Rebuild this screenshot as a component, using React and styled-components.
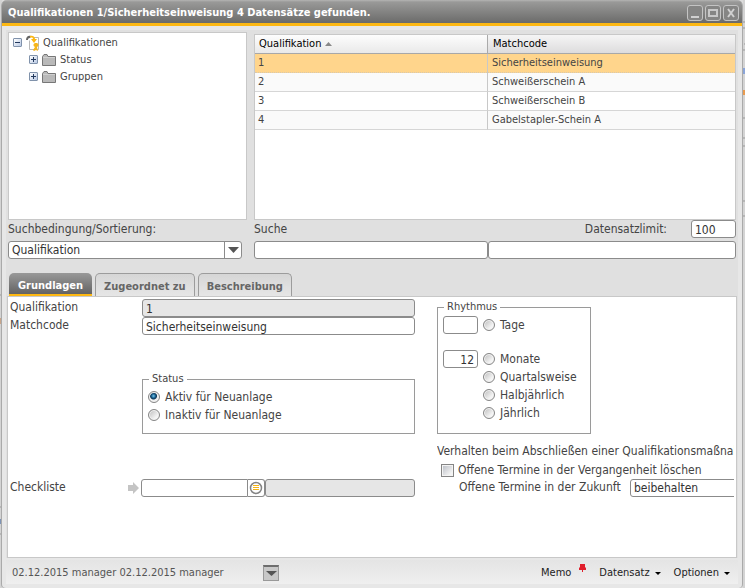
import React, { useState } from "react";
import styled, { createGlobalStyle, css } from "styled-components";

const GlobalStyle = createGlobalStyle`
  *, *::before, *::after { box-sizing: border-box; }
  body {
    margin: 0;
    background: #dcdcdc;
    color: #444;
    font: 12px/18px "DejaVu Sans Condensed", "Noto Sans", sans-serif;
  }
  button, input, select { font: inherit; color: inherit; margin: 0; }
  ul { list-style: none; margin: 0; padding: 0; }
`;

const Desktop = styled.div`
  display: grid;
  grid-template-columns: 2px minmax(0, 1fr) 2px;
  min-height: 100vh;
`;

const EdgeStrip = styled.svg`
  width: 2px;
  height: 100%;
  background: #d4d4d4;
`;

const Window = styled.main`
  display: flex;
  flex-direction: column;
  min-width: 0;
  background: #e7e7e7;
  border-right: 1px solid #aaa;
  border-radius: 6px 6px 4px 4px;
  box-shadow: -1px 0 0 #aaa;
`;

const TitleBar = styled.header`
  display: flex;
  align-items: center;
  justify-content: space-between;
  height: 26px;
  padding: 0 3px 0 6px;
  border-bottom: 3px solid #fdb813;
  border-radius: 5px 5px 0 0;
  background: linear-gradient(#b4b4b3 0, #999998 2px, #6b6b6a 100%);
`;

const Title = styled.h1`
  margin: 0;
  padding-top: 3px;
  font-size: 11px;
  line-height: 20px;
  font-weight: bold;
  color: #fff;
  white-space: nowrap;
`;

const WindowButtons = styled.div`
  display: flex;
  gap: 2px;
  padding-top: 3px;
`;

const WindowButton = styled.button`
  display: grid;
  place-items: center;
  width: 16px;
  height: 16px;
  padding: 0;
  border: 1px solid #c4c4c4;
  border-radius: 3px;
  background: #858584;
`;

const Content = styled.div`
  display: flex;
  flex-direction: column;
  flex: 1;
  margin: 4px 4px 0;
  background: #e0e0e0;
`;

const BrowseGrid = styled.section`
  display: grid;
  grid-template-columns: 239px minmax(0, 1fr);
  column-gap: 7px;
  height: 188px;
  margin: 2px 2px 0;
`;

const Tree = styled.nav`
  padding: 1px 4px;
  background: #fff;
  border: 1px solid #c8c8c8;
  font-size: 11px;
`;

const TreeItem = styled.div`
  display: flex;
  align-items: center;
  gap: 4px;
  height: 17px;
  padding-left: ${(p) => (p.$level ? 16 : 0)}px;
`;

const TreeToggle = styled.button`
  display: grid;
  place-items: center;
  width: 9px;
  height: 9px;
  padding: 0;
  border: 1px solid #8092ab;
  border-radius: 1px;
  background: linear-gradient(135deg, #fff, #b9c9e4);
`;

const RecordList = styled.div`
  margin-top: 2px;
  background: #fff;
  border: 1px solid #c8c8c8;
`;

const Table = styled.table`
  width: 100%;
  table-layout: fixed;
  border-collapse: separate;
  border-spacing: 0;
  font-size: 11px;
  line-height: 18px;
  text-align: left;
`;

const HeaderCell = styled.th`
  width: ${(p) => p.$width};
  height: 18px;
  padding: 0 4px;
  font-weight: normal;
  color: #000;
  border-bottom: 1px solid #a8a8a8;
  background: ${(p) => (p.$sorted ? "linear-gradient(#fdfdfd, #e9e9e9)" : "linear-gradient(#f5f5f5, #dddcdd)")};
  & + & { border-left: 1px solid #aaa; padding-left: 5px; }
`;

const SortButton = styled.button`
  display: flex;
  align-items: center;
  gap: 4px;
  padding: 0;
  border: 0;
  background: none;
`;

const Row = styled.tr`
  background: #fff;
  &:nth-child(even) { background: #fafafa; }
  ${(p) => p.$selected && css`background: #ffd58c;`}
`;

const Cell = styled.td`
  height: 19px;
  padding: 0 3px;
  border-bottom: 1px ${(p) => (p.$selected ? "dotted #d8c8ac" : "solid #d6d6d6")};
  & + & { border-left: 1px ${(p) => (p.$selected ? "dotted #d8bc84" : "solid #c8c8c8")}; padding-left: 4px; }
`;

const SearchGrid = styled.section`
  display: grid;
  grid-template-columns: 234px minmax(0, 1fr);
  column-gap: 12px;
  row-gap: 3px;
  margin: 0 2px;
`;

const Label = styled.label`
  white-space: nowrap;
`;

const FieldLabel = styled(Label)`
  line-height: 16px;
`;

const SearchLabels = styled.div`
  display: flex;
  justify-content: space-between;
  align-items: center;
`;

const Limit = styled.div`
  display: flex;
  align-items: center;
  gap: 24px;
`;

const InputPair = styled.div`
  display: grid;
  grid-template-columns: 234px minmax(0, 1fr);
`;

const Input = styled.input`
  width: ${(p) => p.$width || "100%"};
  min-width: 0;
  height: 18px;
  padding: 1px 3px 0;
  border: 1px solid #8b8b8b;
  border-radius: 3px;
  background: #fff;
  color: #333;
  text-align: ${(p) => p.$align || "left"};
  &:read-only { background: #e6e6e6; }
  &:focus { outline: 1px solid #fdb813; }
`;

const SelectBox = styled.div`
  display: grid;
  grid-template-columns: minmax(0, 1fr) 17px;
  width: ${(p) => p.$width || "100%"};
  height: 18px;
  border: 1px solid #8b8b8b;
  border-radius: 3px;
  background: #fff;
`;

const Select = styled.select`
  grid-area: 1 / 1 / 2 / 3;
  height: 16px;
  padding: 0 20px 0 3px;
  border: 0;
  background: none;
  appearance: none;
  line-height: 16px;
  color: #333;
`;

const SelectArrow = styled.span`
  grid-area: 1 / 2;
  display: grid;
  place-items: center;
  border-left: 1px solid #8b8b8b;
  pointer-events: none;
`;

const Tabs = styled.div`
  display: flex;
  gap: 3px;
  margin: 14px 3px 0;
`;

const Tab = styled.button`
  height: 23px;
  padding: 3px 8px 0;
  border: 1px solid #9c9c9c;
  border-bottom: 0;
  border-radius: 5px 5px 0 0;
  background: linear-gradient(#d6d6d6, #e6e6e6);
  font-size: 11px;
  line-height: 20px;
  font-weight: bold;
  color: #666;
  white-space: nowrap;
  ${(p) => p.$active && css`
    border: 0;
    padding: 3px 9px 0;
    border-bottom: 2px solid #fdb813;
    background: linear-gradient(#999, #636363);
    color: #fff;
  `}
`;

const Panel = styled.section`
  display: grid;
  grid-template-columns: 405px minmax(0, 1fr);
  column-gap: 22px;
  flex: 1;
  margin: 0 1px;
  padding: 2px 2px 0;
  background: #fff;
  border: 1px solid #c8c8c8;
`;

const FormColumn = styled.div`
  display: grid;
  grid-template-columns: 132px minmax(0, 1fr);
  align-content: start;
`;

const Group = styled.fieldset`
  grid-column: ${(p) => p.$column || "auto"};
  width: ${(p) => p.$width || "auto"};
  min-width: 0;
  margin: ${(p) => p.$margin || 0};
  padding: ${(p) => p.$padding};
  border: 1px solid #9a9a9a;
`;

const Legend = styled.legend`
  margin-left: 1px;
  padding: 0 3px;
  font-size: 11px;
  line-height: 16px;
`;

const Option = styled.label`
  grid-column: 2;
  display: flex;
  align-items: center;
  gap: 5px;
  height: 18px;
  white-space: nowrap;
`;

const Radio = styled.input.attrs({ type: "radio" })`
  appearance: none;
  flex: none;
  width: 12px;
  height: 12px;
  border: 1px solid #858585;
  border-radius: 50%;
  box-shadow: inset 0 0 0 1px #f4f4f4;
  background: linear-gradient(135deg, #bbb, #f4f4f4 70%);
  &:checked {
    background: radial-gradient(circle at 45% 40%, #79c8ef 0, #17608e 2px, #0d3556 3px, #eee 4px);
  }
`;

const CheckBox = styled.input.attrs({ type: "checkbox" })`
  appearance: none;
  flex: none;
  width: 13px;
  height: 13px;
  border: 1px solid #858585;
  box-shadow: inset 0 0 0 1px #f4f4f4;
  background: linear-gradient(135deg, #b8bcc4, #f4f4f4 80%);
  &:checked { background: #17608e; }
`;

const ChecklistLabel = styled(FieldLabel)`
  display: flex;
  align-items: flex-start;
  justify-content: space-between;
  padding-right: 2px;
  & svg { margin-top: 3px; }
`;

const ChecklistRow = styled.div`
  grid-column: 1 / 3;
  display: grid;
  grid-template-columns: 131px 107px 17px minmax(0, 1fr);
  margin-top: 45px;
`;

const LookupInput = styled(Input)`
  border-radius: 3px 0 0 3px;
`;

const LookupButton = styled.button`
  display: grid;
  place-items: center;
  padding: 0;
  border: 1px solid #8b8b8b;
  border-left: 0;
  border-radius: 0 3px 3px 0;
  background: #fff;
`;

const RhythmGrid = styled.div`
  display: grid;
  grid-template-columns: 35px auto;
  column-gap: 5px;
`;

const RhythmGap = styled.div`
  grid-column: 1 / 3;
  height: 16px;
`;

const SideColumn = styled.div`
  min-width: 0;
  overflow: hidden;
`;

const Heading = styled.div`
  margin: 8px 0 1px;
  white-space: nowrap;
`;

const CheckLine = styled.label`
  display: flex;
  align-items: center;
  gap: 4px;
  padding-left: 4px;
  white-space: nowrap;
`;

const FutureRow = styled.div`
  display: flex;
  justify-content: space-between;
  width: 323px;
  padding-left: 22px;
`;

const Footer = styled.footer`
  display: grid;
  grid-template-columns: 251px 1fr auto;
  align-items: center;
  height: 24px;
  margin: 2px 4px 4px;
  padding: 2px 8px 0 6px;
  background: linear-gradient(#e4e4e4, #efefef);
  font-size: 11px;
  color: #555;
`;

const CollapseButton = styled.button`
  display: grid;
  place-items: center;
  width: 16px;
  height: 16px;
  padding: 0;
  border: 1px solid #999;
  border-top: 2px solid #6d6d6d;
  background: #c8c8c8;
`;

const FooterMenu = styled.div`
  display: flex;
  gap: 13px;
`;

const MenuButton = styled.button`
  display: flex;
  align-items: center;
  gap: 5px;
  padding: 0;
  border: 0;
  background: none;
  color: #222;
`;

const MemoButton = styled(MenuButton)`
  align-items: flex-start;
  gap: 8px;
`;

const Triangle = ({ w, h, fill, up }) => (
  <svg width={w} height={h} viewBox="0 0 10 5" preserveAspectRatio="none" aria-hidden="true">
    <path d={up ? "M0 5 5 0l5 5z" : "M0 0h10L5 5z"} fill={fill} />
  </svg>
);

const Toggle = ({ open, name }) => (
  <TreeToggle type="button" aria-expanded={Boolean(open)} aria-label={name}>
    <svg width="7" height="7" viewBox="0 0 7 7"><path d={open ? "M1 3h5v1H1z" : "M1 3h2V1h1v2h2v1H4v2H3V4H1z"} fill="#23395d" /></svg>
  </TreeToggle>
);

const FolderIcon = () => (
  <svg width="14" height="12" viewBox="0 0 14 12" aria-hidden="true">
    <path d="M.5 11.5V2.500L2 .5h3l1 2h7.500v9z" fill="#b9b9b9" stroke="#777" />
    <path d="M1 3.500h12" stroke="#d0d0d0" />
  </svg>
);

const DocumentIcon = () => (
  <svg width="13" height="16" viewBox="0 0 13 16" aria-hidden="true">
    <path d="M3.500 5.500V14.500H12.500V2.500H8" fill="#fff" stroke="#b9b9b9" />
    <path d="M0 5C0 1 3 0 5 1l-1 2C2 3 2 4 2 5z" fill="#666" />
    <path d="M4 1c3-1 5 1 5 3h2L8 8 5 4h2C7 3 6 2 4 3z" fill="#fdb813" />
    <path d="M10 8a2 2 0 0 1 1 4l1 4-2-1-2 1-1-1 2-3a2 2 0 0 1 1-4z" fill="#f5b51b" />
  </svg>
);

const records = [
  ["1", "Sicherheitseinweisung"],
  ["2", "Schweißerschein A"],
  ["3", "Schweißerschein B"],
  ["4", "Gabelstapler-Schein A"],
];

const rhythms = ["Quartalsweise", "Halbjährlich", "Jährlich"];
const tabs = ["Grundlagen", "Zugeordnet zu", "Beschreibung"];

export default function App() {
  const [selected, setSelected] = useState("1");
  const [tab, setTab] = useState("Grundlagen");

  return (
    <>
      <GlobalStyle />
      <Desktop>
        <EdgeStrip aria-hidden="true">
          <path d="M0 295h2M0 507h2M0 534h2" stroke="#999" />
          <path d="M0 318h2v6H0z" fill="#c8a58a" />
          <path d="M0 519h2v5H0z" fill="#7d93b5" />
        </EdgeStrip>
        <Window>
          <TitleBar>
            <Title>Qualifikationen 1/Sicherheitseinweisung 4 Datensätze gefunden.</Title>
            <WindowButtons>
              <WindowButton type="button" aria-label="Minimieren">
                <svg width="14" height="14"><path d="M3 10h8v2H3z" fill="#d0d0d0" /></svg>
              </WindowButton>
              <WindowButton type="button" aria-label="Maximieren">
                <svg width="14" height="14"><path d="M3 4h8v6H3z" fill="none" stroke="#c8c8c8" strokeWidth="2" /></svg>
              </WindowButton>
              <WindowButton type="button" aria-label="Schließen">
                <svg width="14" height="14"><path d="M4 3l6 8M10 3l-6 8" stroke="#d0d0d0" strokeWidth="2" /></svg>
              </WindowButton>
            </WindowButtons>
          </TitleBar>

          <Content>
            <BrowseGrid>
              <Tree aria-label="Qualifikationen">
                <ul>
                  <li>
                    <TreeItem><Toggle open name="Qualifikationen" /><DocumentIcon />Qualifikationen</TreeItem>
                    <ul>
                      {["Status", "Gruppen"].map((name) => (
                        <li key={name}>
                          <TreeItem $level={1}><Toggle name={name} /><FolderIcon />{name}</TreeItem>
                        </li>
                      ))}
                    </ul>
                  </li>
                </ul>
              </Tree>
              <RecordList>
                <Table>
                  <thead>
                    <tr>
                      <HeaderCell $sorted $width="232px" aria-sort="ascending">
                        <SortButton type="button">Qualifikation<Triangle w={7} h={4} fill="#888" up /></SortButton>
                      </HeaderCell>
                      <HeaderCell>Matchcode</HeaderCell>
                    </tr>
                  </thead>
                  <tbody>
                    {records.map(([id, name]) => (
                      <Row key={id} $selected={id === selected} onClick={() => setSelected(id)}>
                        <Cell $selected={id === selected}>{id}</Cell>
                        <Cell $selected={id === selected}>{name}</Cell>
                      </Row>
                    ))}
                  </tbody>
                </Table>
              </RecordList>
            </BrowseGrid>

            <SearchGrid>
              <Label htmlFor="sort">Suchbedingung/Sortierung:</Label>
              <SearchLabels>
                <FieldLabel htmlFor="search">Suche</FieldLabel>
                <Limit>
                  <Label htmlFor="limit">Datensatzlimit:</Label>
                  <Input id="limit" $width="45px" defaultValue="100" />
                </Limit>
              </SearchLabels>
              <SelectBox>
                <Select id="sort"><option>Qualifikation</option></Select>
                <SelectArrow><Triangle w={11} h={6} fill="#555" /></SelectArrow>
              </SelectBox>
              <InputPair>
                <Input id="search" />
                <Input aria-label="Suche Matchcode" />
              </InputPair>
            </SearchGrid>

            <Tabs role="tablist">
              {tabs.map((name) => (
                <Tab key={name} type="button" role="tab" aria-selected={tab === name} $active={tab === name} onClick={() => setTab(name)}>
                  {name}
                </Tab>
              ))}
            </Tabs>

            <Panel role="tabpanel">
              <FormColumn>
                <FieldLabel htmlFor="qualification">Qualifikation</FieldLabel>
                <Input id="qualification" value="1" readOnly />
                <FieldLabel htmlFor="matchcode">Matchcode</FieldLabel>
                <Input id="matchcode" defaultValue="Sicherheitseinweisung" />
                <Group $column="2" $margin="36px 0 0" $padding="1px 5px 9px">
                  <Legend>Status</Legend>
                  <Option><Radio name="status" defaultChecked />Aktiv für Neuanlage</Option>
                  <Option><Radio name="status" />Inaktiv für Neuanlage</Option>
                </Group>
                <ChecklistRow>
                  <ChecklistLabel htmlFor="checklist">
                    Checkliste
                    <svg width="11" height="12" viewBox="0 0 11 12" aria-hidden="true"><path d="M0 3h5V0l6 6-6 6V9H0z" fill="#c4c4c4" /></svg>
                  </ChecklistLabel>
                  <LookupInput id="checklist" />
                  <LookupButton type="button" aria-label="Checkliste auswählen">
                    <svg width="14" height="14" viewBox="0 0 14 14">
                      <circle cx="7" cy="7" r="5.500" fill="#fff" stroke="#858585" strokeWidth="1.500" />
                      <path d="M4 4h6v1H4zM4 6h6v1H4zM4 8h6v1H4z" fill="#f7b512" />
                    </svg>
                  </LookupButton>
                  <Input aria-label="Bezeichnung der Checkliste" readOnly />
                </ChecklistRow>
              </FormColumn>

              <SideColumn>
                <Group $width="154px" $padding="1px 5px 11px">
                  <Legend>Rhythmus</Legend>
                  <RhythmGrid>
                    <Input aria-label="Anzahl Tage" />
                    <Option><Radio name="rhythm" />Tage</Option>
                    <RhythmGap />
                    <Input aria-label="Anzahl Monate" $align="right" defaultValue="12" />
                    <Option><Radio name="rhythm" />Monate</Option>
                    {rhythms.map((name) => (
                      <Option key={name}><Radio name="rhythm" />{name}</Option>
                    ))}
                  </RhythmGrid>
                </Group>
                <Heading>Verhalten beim Abschließen einer Qualifikationsmaßnahme</Heading>
                <CheckLine><CheckBox />Offene Termine in der Vergangenheit löschen</CheckLine>
                <FutureRow>
                  <FieldLabel htmlFor="future">Offene Termine in der Zukunft</FieldLabel>
                  <SelectBox $width="130px">
                    <Select id="future"><option>beibehalten</option></Select>
                    <SelectArrow><Triangle w={11} h={6} fill="#555" /></SelectArrow>
                  </SelectBox>
                </FutureRow>
              </SideColumn>
            </Panel>
          </Content>

          <Footer>
            <span>02.12.2015 manager 02.12.2015 manager</span>
            <CollapseButton type="button" aria-label="Einklappen"><Triangle w={11} h={5} fill="#555" /></CollapseButton>
            <FooterMenu>
              <MemoButton type="button">
                Memo
                <svg width="7" height="9" viewBox="0 0 7 9" aria-hidden="true"><path d="M1 0h5v3l1 1v2H4v2H3V6H0V4l1-1z" fill="#e01e2b" /></svg>
              </MemoButton>
              <MenuButton type="button">Datensatz<Triangle w={6} h={3} fill="#000" /></MenuButton>
              <MenuButton type="button">Optionen<Triangle w={6} h={3} fill="#000" /></MenuButton>
            </FooterMenu>
          </Footer>
        </Window>
        <EdgeStrip aria-hidden="true">
          <path d="M0 22h2M0 28h2M1 44h1M0 50h2M0 118h2M0 138h2M0 146h2M0 201h2M0 216h2" stroke="#999" />
          <path d="M0 68h2v6H0z" fill="#8ba5d8" />
          <path d="M0 90h2v5H0z" fill="#e89b50" />
        </EdgeStrip>
      </Desktop>
    </>
  );
}
